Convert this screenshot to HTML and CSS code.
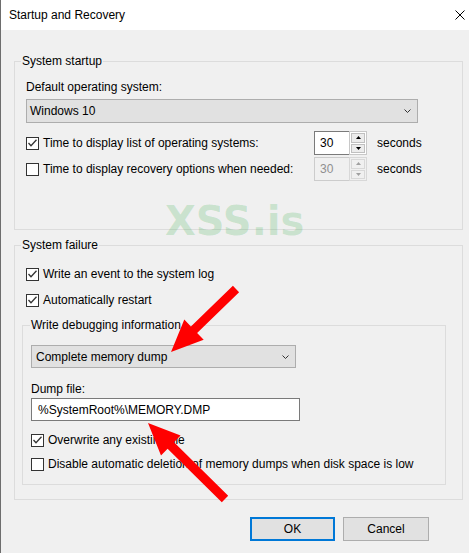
FILE: index.html
```html
<!DOCTYPE html>
<html lang="en">
<head>
  <meta charset="UTF-8" />
  <meta name="viewport" content="width=device-width, initial-scale=1.0" />
  <title>Startup and Recovery</title>
  <link rel="stylesheet" href="styles.css">
</head>
<body>

  <div class="window">
    <div class="titlebar">
      <span class="title">Startup and Recovery</span>
      <svg class="close" width="10" height="10" viewBox="0 0 10 10"><path d="M0.5 0.5 L9.5 9.5 M9.5 0.5 L0.5 9.5" stroke="#000" stroke-width="1" fill="none"/></svg>
    </div>

    <div class="content">
      <fieldset class="group">
        <legend>System startup</legend>
        <div class="label">Default operating system:</div>
        <div class="select os-select">
          <span>Windows 10</span>
          <svg class="chevron" width="7" height="4" viewBox="0 0 7 4"><polyline points="0.5,0.5 3.5,3.5 6.5,0.5" stroke="#333" fill="none"/></svg>
        </div>

        <div class="row timer first">
          <span class="check checked"><svg width="11" height="11" viewBox="0 0 11 11"><polyline points="1.5,5 4,7.8 9.5,1.8" stroke="#333" stroke-width="1.3" fill="none"/></svg></span>
          <span class="timer-label">Time to display list of operating systems:</span>
          <div class="spin">
            <span class="spin-value">30</span>
            <div class="spin-btns">
              <span class="spin-btn"><svg width="5" height="3" viewBox="0 0 5 3"><polygon points="2.5,0 5,3 0,3" fill="#000"/></svg></span>
              <span class="spin-btn"><svg width="5" height="3" viewBox="0 0 5 3"><polygon points="0,0 5,0 2.5,3" fill="#000"/></svg></span>
            </div>
          </div>
          <span class="unit">seconds</span>
        </div>

        <div class="row timer second">
          <span class="check"></span>
          <span class="timer-label">Time to display recovery options when needed:</span>
          <div class="spin disabled">
            <span class="spin-value">30</span>
            <div class="spin-btns">
              <span class="spin-btn"><svg width="5" height="3" viewBox="0 0 5 3"><polygon points="2.5,0 5,3 0,3" fill="#a0a0a0"/></svg></span>
              <span class="spin-btn"><svg width="5" height="3" viewBox="0 0 5 3"><polygon points="0,0 5,0 2.5,3" fill="#a0a0a0"/></svg></span>
            </div>
          </div>
          <span class="unit">seconds</span>
        </div>
      </fieldset>

      <fieldset class="group failure">
        <legend>System failure</legend>

        <div class="row option">
          <span class="check checked"><svg width="11" height="11" viewBox="0 0 11 11"><polyline points="1.5,5 4,7.8 9.5,1.8" stroke="#333" stroke-width="1.3" fill="none"/></svg></span>
          <span>Write an event to the system log</span>
        </div>
        <div class="row option restart">
          <span class="check checked"><svg width="11" height="11" viewBox="0 0 11 11"><polyline points="1.5,5 4,7.8 9.5,1.8" stroke="#333" stroke-width="1.3" fill="none"/></svg></span>
          <span>Automatically restart</span>
        </div>

        <fieldset class="group debug">
          <legend>Write debugging information</legend>
          <div class="select dump-select">
            <span>Complete memory dump</span>
            <svg class="chevron" width="7" height="4" viewBox="0 0 7 4"><polyline points="0.5,0.5 3.5,3.5 6.5,0.5" stroke="#333" fill="none"/></svg>
          </div>
          <div class="label dump-label">Dump file:</div>
          <div class="textbox">%SystemRoot%\MEMORY.DMP</div>
          <div class="row option overwrite">
            <span class="check checked"><svg width="11" height="11" viewBox="0 0 11 11"><polyline points="1.5,5 4,7.8 9.5,1.8" stroke="#333" stroke-width="1.3" fill="none"/></svg></span>
            <span>Overwrite any existing file</span>
          </div>
          <div class="row option disable">
            <span class="check"></span>
            <span>Disable automatic deletion of memory dumps when disk space is low</span>
          </div>
        </fieldset>
      </fieldset>
    </div>

    <div class="footer">
      <button class="btn default">OK</button>
      <button class="btn cancel">Cancel</button>
    </div>

    <div class="watermark">XSS.is</div>

    <svg class="arrows" width="469" height="553" viewBox="0 0 469 553">
      <polygon points="171,352 184.3,319.6 190.9,326.5 232.9,285.8 239.1,292.2 197.1,332.9 203.7,339.8" fill="#ff0000"/>
      <polygon points="148,423 180.6,435.5 174,442.3 228.2,495.8 221.8,502.2 167.6,448.7 161,455.5" fill="#ff0000"/>
    </svg>
  </div>

</body>
</html>
```

FILE: styles.css
```css
body {

  margin: 0;
  background-color: #f0f0f0;
  color: #000;
  font-family: "Liberation Sans", Arial, sans-serif;
  font-size: 12px;
  line-height: 16px;

}

.window {

  position: relative;
  height: 553px;
  overflow: hidden;
  border-left: 1px solid #6d6d6d;

}

.titlebar {

  display: flex;
  align-items: center;
  height: 30px;
  padding: 0 4px 0 8px;
  background-color: #fff;

}

.close {

  margin-left: auto;

}

.content {

  padding: 23px 6px 0 13px;

}

.group {

  margin: 0;
  min-width: 0;
  border: 1px solid #dcdcdc;
  padding: 10px 11px 48px 11px;

}

.group legend {

  padding: 0 1px;
  margin-left: -5px;
  line-height: 16px;

}

.failure {

  margin-top: 7px;
  padding: 13px 11px 14px 11px;

}

.debug {

  margin: 9px 5px 0 -4px;
  padding: 12px 8px 12px 8px;

}

.debug legend {

  margin-left: -1px;

}

.select {

  display: flex;
  align-items: center;
  box-sizing: border-box;
  background-color: #e1e1e1;
  border: 1px solid #adadad;
  padding: 0 6px 0 3px;

}

.select .chevron {

  margin-left: auto;

}

.os-select {

  width: 392px;
  height: 24px;
  margin-top: 4px;

}

.dump-select {

  width: 265px;
  height: 23px;
  padding-left: 4px;

}

.row {

  display: flex;
  align-items: center;

}

.check {

  display: flex;
  box-sizing: border-box;
  width: 13px;
  height: 13px;
  border: 1px solid #333;
  background-color: #fff;
  margin-right: 4px;
  flex-shrink: 0;

}

.timer {

  height: 24px;

}

.timer.first {

  margin-top: 8px;

}

.timer.second {

  margin-top: 2px;

}

.timer-label {

  width: 271px;

}

.spin {

  display: flex;
  width: 53px;
  height: 24px;
  box-sizing: border-box;

}

.spin-value {

  box-sizing: border-box;
  width: 35px;
  height: 24px;
  padding: 3px 0 0 5px;
  background-color: #fff;
  border: 1px solid #7a7a7a;
  border-right: 0;

}

.spin-btns {

  display: flex;
  flex-direction: column;
  box-sizing: border-box;
  width: 18px;
  height: 24px;
  padding: 1px;
  gap: 1px;
  background-color: #fff;
  border: 1px solid #c8c8c8;

}

.spin-btn {

  flex: 1;
  display: flex;
  align-items: center;
  justify-content: center;
  background-color: #ececec;
  border: 1px solid #c0c0c0;

}

.spin.disabled .spin-value {

  background-color: #f0f0f0;
  color: #8f8f8f;
  border-color: #cccccc;

}

.spin.disabled .spin-btns {

  background-color: #f0f0f0;
  border-color: #d8d8d8;

}

.spin.disabled .spin-btn {

  background-color: #f0f0f0;
  border-color: #d8d8d8;

}

.unit {

  margin-left: 10px;

}

.option {

  height: 16px;

}

.restart {

  margin-top: 10px;

}

.dump-label {

  margin-top: 13px;
  margin-bottom: 1px;

}

.textbox {

  box-sizing: border-box;
  width: 269px;
  height: 23px;
  padding: 3px 0 0 6px;
  background-color: #fff;
  border: 1px solid #7a7a7a;

}

.overwrite {

  margin-top: 11px;

}

.disable {

  margin-top: 8px;

}

.footer {

  display: flex;
  justify-content: flex-end;
  gap: 8px;
  margin-top: 17px;
  padding-right: 40px;

}

.btn {

  box-sizing: border-box;
  width: 86px;
  height: 24px;
  background-color: #e1e1e1;
  border: 1px solid #adadad;
  font-family: "Liberation Sans", Arial, sans-serif;
  font-size: 12px;
  color: #000;
  padding: 0;

}

.btn.default {

  width: 85px;
  border: 2px solid #0078d7;

}

.watermark {

  position: absolute;
  left: 164px;
  top: 197px;
  font-family: "DejaVu Sans", sans-serif;
  font-weight: bold;
  font-size: 40px;
  line-height: 48px;
  color: rgba(40, 170, 60, 0.2);

}

.arrows {

  position: absolute;
  left: -1px;
  top: 0;
  pointer-events: none;

}
```
